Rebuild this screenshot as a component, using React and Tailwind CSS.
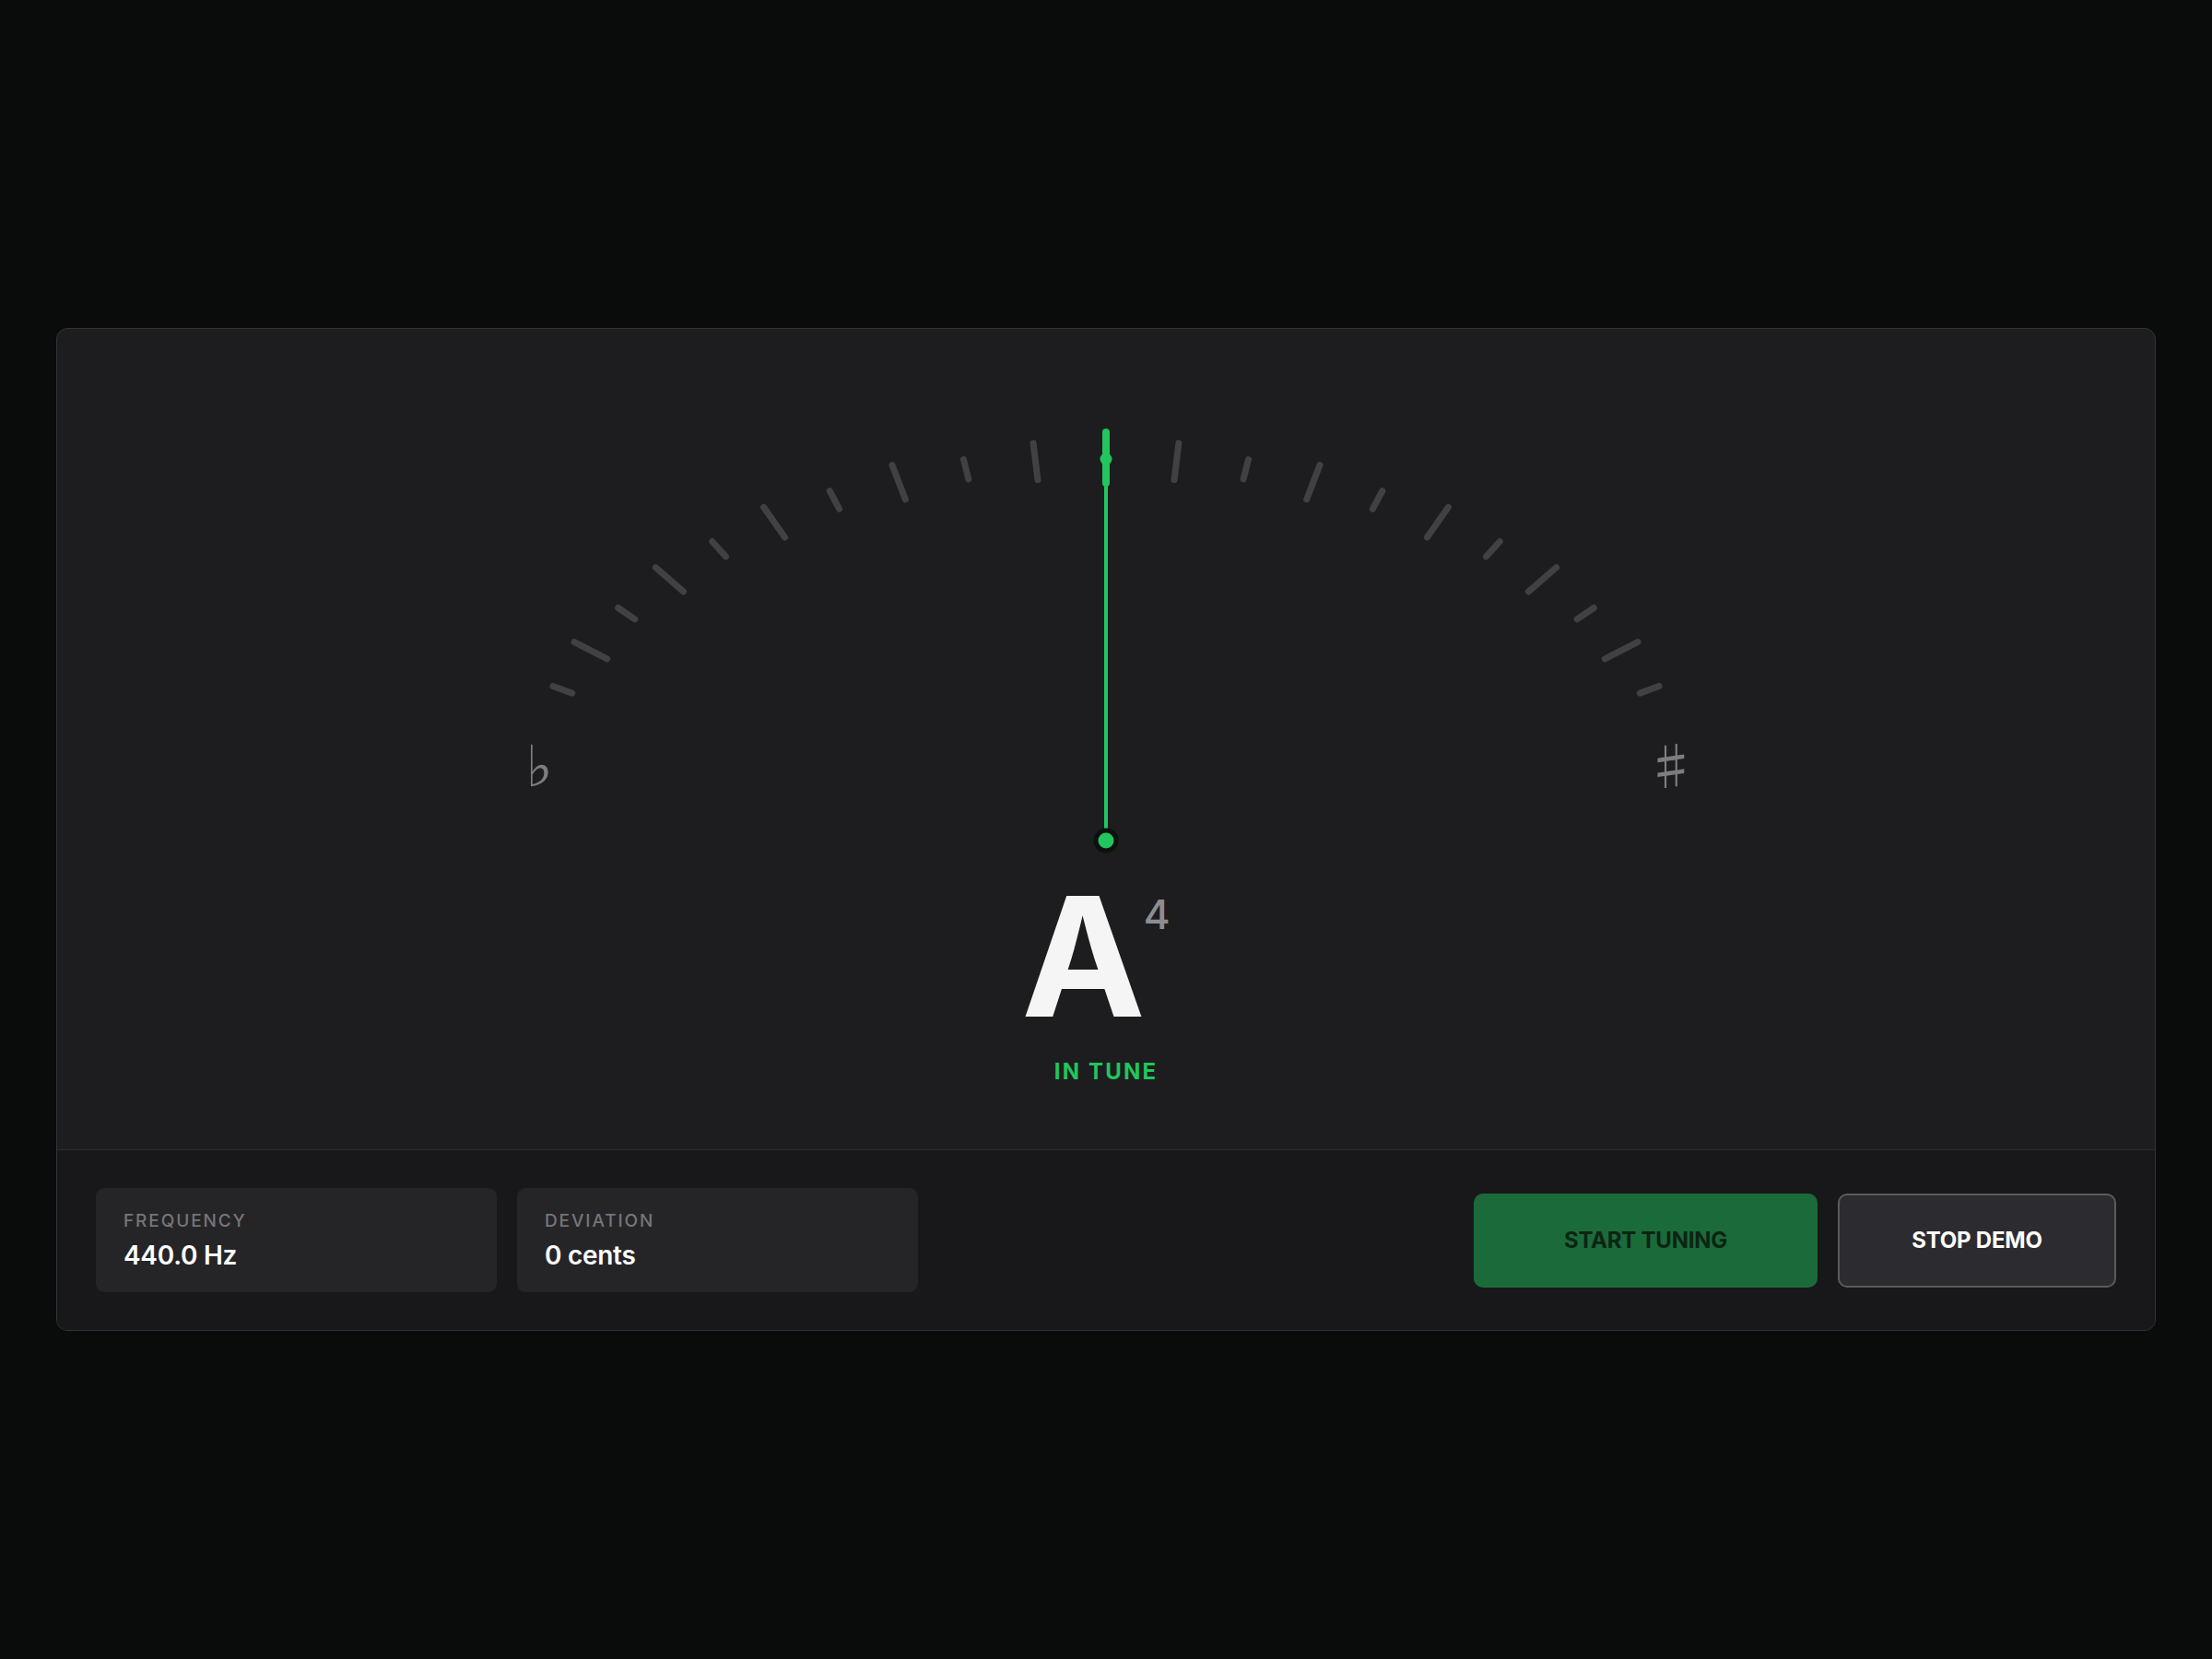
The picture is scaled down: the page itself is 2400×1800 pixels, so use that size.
import React from "react";

// Gauge geometry, in the SVG's own pixel space (1400 x 475).
const CX = 700;
const TICK_CY = 427.5;
const TICK_RX = 627.5;
const TICK_RY = 380.6;
const STEP = 7; // degrees between ticks
const PIVOT_Y = 461;

const ticks = [];
for (let i = -10; i <= 10; i++) {
  if (i === 0) continue;
  const deg = i * STEP;
  const rad = (deg * Math.PI) / 180;
  const x = CX + TICK_RX * Math.sin(rad);
  const y = TICK_CY - TICK_RY * Math.cos(rad);
  const half = Math.abs(i) % 2 === 1 ? 20 : 11;
  const dx = Math.sin(rad) * half;
  const dy = -Math.cos(rad) * half;
  ticks.push({ key: i, x1: x - dx, y1: y - dy, x2: x + dx, y2: y + dy });
}

const flatFont = "'DejaVu Serif', 'Noto Sans CJK JP', serif";
const sharpFont = "'Noto Sans CJK JP', 'DejaVu Sans', sans-serif";

function Gauge() {
  return (
    <svg width="1400" height="475" viewBox="0 0 1400 475" className="block">
      {ticks.map((t) => (
        <line
          key={t.key}
          x1={t.x1}
          y1={t.y1}
          x2={t.x2}
          y2={t.y2}
          stroke="#3f4144"
          strokeWidth="7"
          strokeLinecap="round"
        />
      ))}
      <text x="85" y="402" textAnchor="middle" fill="#7d7d81" fontSize="62" fontFamily={flatFont}>
        ♭
      </text>
      <text x="1313" y="401" textAnchor="middle" fill="#7d7d81" fontSize="55" fontFamily={sharpFont}>
        ♯
      </text>
      {/* needle */}
      <line x1={CX} y1={PIVOT_Y} x2={CX} y2="74" stroke="#22c55e" strokeWidth="4" />
      <line x1={CX} y1="18" x2={CX} y2="73" stroke="#22c55e" strokeWidth="8" strokeLinecap="round" />
      <circle cx={CX} cy="47" r="6.5" fill="#22c55e" />
      <circle cx={CX} cy={PIVOT_Y} r="11" fill="#22c55e" stroke="#0e100f" strokeWidth="5" />
    </svg>
  );
}

function Stat({ label, value }) {
  return (
    <div className="w-[435px] rounded-[9px] bg-[#252528] px-[30px] py-[22px]">
      <div className="text-[19px] leading-[27px] font-medium tracking-[0.1em] text-[#76767a]">
        {label}
      </div>
      <div className="mt-[6px] text-[28px] leading-[36px] font-semibold tracking-[-0.01em] text-white">
        {value}
      </div>
    </div>
  );
}

export default function App() {
  return (
    <div
      className="min-h-screen bg-[#0a0c0c] flex items-center px-[61px]"
      style={{ fontFamily: "Inter, 'Liberation Sans', sans-serif" }}
    >
      <div className="w-full rounded-[12px] border border-[#333437] bg-[#1d1d1f] overflow-hidden">
        <div className="flex flex-col items-center pt-[94px] pb-[68px]">
          <Gauge />
          <div className="mt-[22px] flex items-start pr-[22px]">
            <span className="text-[180px] leading-[180px] font-bold text-[#f5f5f5]">A</span>
            <span className="-ml-[2px] mt-[22px] text-[44px] leading-[44px] font-medium text-[#8d8d91]">
              4
            </span>
          </div>
          <div className="mt-[19px] text-[24px] leading-[32px] font-bold tracking-[0.09em] text-[#22c55e]">
            IN TUNE
          </div>
        </div>
        <div className="border-t border-[#2c2c2f] bg-[#18181a] flex items-center justify-between px-[42px] py-[41px]">
          <div className="flex gap-[22px]">
            <Stat label="FREQUENCY" value="440.0 Hz" />
            <Stat label="DEVIATION" value="0 cents" />
          </div>
          <div className="flex gap-[22px]">
            <button className="w-[373px] h-[102px] rounded-[10px] bg-[#1b6b3a] text-[24px] font-bold tracking-[-0.01em] text-[#0b2414]">
              START TUNING
            </button>
            <button className="w-[302px] h-[102px] rounded-[10px] border-2 border-[#5a5a5f] bg-[#2c2c30] text-[24px] font-bold tracking-[-0.01em] text-white">
              STOP DEMO
            </button>
          </div>
        </div>
      </div>
    </div>
  );
}
